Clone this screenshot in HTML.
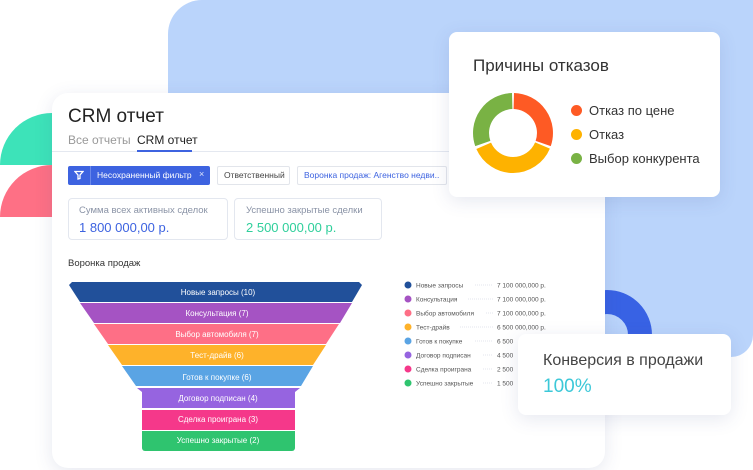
<!DOCTYPE html>
<html><head><meta charset="utf-8"><style>
*{margin:0;padding:0;box-sizing:border-box}
body{width:753px;height:470px;overflow:hidden;background:#fff;font-family:"Liberation Sans","DejaVu Sans",sans-serif;position:relative}
.abs{position:absolute}
.card{position:absolute;background:#fff;border-radius:14px;box-shadow:0 4px 18px rgba(60,80,140,.13)}
.t{position:absolute;white-space:nowrap}
</style></head><body>
<div class="abs" style="left:168px;top:0;width:585px;height:357px;background:#bad4fb;border-radius:34px 0 22px 0"></div>
<svg class="abs" style="left:0;top:0" width="753" height="470">
<circle cx="607" cy="335" r="33" fill="none" stroke="#3862e4" stroke-width="24"/>
<path d="M52 113 A52 52 0 0 0 0 165 L52 165Z" fill="#3de3b9"/>
<path d="M52 165 A52 52 0 0 0 0 217 L52 217Z" fill="#fe7085"/>
</svg>
<div class="card" style="left:52px;top:93px;width:553px;height:375px;border-radius:16px">
<div class="t" style="left:16px;top:13px;font-size:19px;color:#222">CRM отчет</div>
<div class="t" style="left:16px;top:40px;font-size:12px;color:#999">Все отчеты</div>
<div class="t" style="left:85px;top:40px;font-size:12px;color:#222">CRM отчет</div>
<div class="abs" style="left:0;top:58px;width:553px;height:1px;background:#e4e8f0"></div>
<div class="abs" style="left:85px;top:57px;width:55px;height:2px;background:#3d63e0"></div>
<div class="abs" style="left:16px;top:73px;width:142px;height:19px;background:#3d63e0;border-radius:2px"></div>
<div class="abs" style="left:38px;top:73px;width:1px;height:19px;background:#6a88ea"></div>
<svg class="abs" style="left:22px;top:77px" width="10" height="10"><path d="M1 1.5H9L6 5V8.5L4 9V5Z" fill="none" stroke="#fff" stroke-width="1.3"/></svg>
<div class="t" style="left:45px;top:77px;font-size:8.5px;color:#fff">Несохраненный фильтр</div>
<div class="t" style="left:147px;top:76px;font-size:9px;color:#dfe6fb">×</div>
<div class="abs" style="left:165px;top:73px;width:73px;height:19px;border:1px solid #e2e5eb;border-radius:2px"></div>
<div class="t" style="left:172px;top:77px;font-size:8.5px;color:#444">Ответственный</div>
<div class="abs" style="left:245px;top:73px;width:150px;height:19px;border:1px solid #e2e5eb;border-radius:2px"></div>
<div class="t" style="left:252px;top:77px;font-size:8.5px;color:#3d63e0">Воронка продаж: Агенство недви..</div>
<div class="abs" style="left:16px;top:105px;width:160px;height:42px;border:1px solid #e3e7ef;border-radius:4px"></div>
<div class="t" style="left:27px;top:112px;font-size:9.5px;color:#8a93a6">Сумма всех активных сделок</div>
<div class="t" style="left:27px;top:127px;font-size:13px;color:#3d63e0">1 800 000,00 р.</div>
<div class="abs" style="left:182px;top:105px;width:148px;height:42px;border:1px solid #e3e7ef;border-radius:4px"></div>
<div class="t" style="left:194px;top:112px;font-size:9.5px;color:#8a93a6">Успешно закрытые сделки</div>
<div class="t" style="left:194px;top:127px;font-size:13px;color:#2fcf9b">2 500 000,00 р.</div>
<div class="t" style="left:16px;top:165px;font-size:9.5px;color:#333">Воронка продаж</div>
</div>
<svg class="abs" style="left:0;top:0" width="753" height="470" font-family="Liberation Sans, sans-serif" font-size="8" fill="#fff" text-anchor="middle">
<polygon points="72,282 359,282 362,285 352,302 80,302 69,285" fill="#21509a"/>
<polygon points="80,303 352,303 340,323 94,323" fill="#a553c3"/>
<polygon points="94,324 339,324 326,344 108,344" fill="#fe6f86"/>
<polygon points="108,345 326,345 313,365 122,365" fill="#feb22a"/>
<polygon points="122,366 313,366 301,386 136,386" fill="#5aa4e4"/>
<polygon points="137,388 300,388 295,392 295,408 142,408 142,392" fill="#9664e0"/>
<rect x="142" y="410" width="153" height="20" fill="#f5388a"/>
<path d="M142 431H295V448a3 3 0 0 1-3 3H145a3 3 0 0 1-3-3Z" fill="#2fc46f"/>
<text x="218" y="295">Новые запросы  (10)</text>
<text x="217" y="316">Консультация  (7)</text>
<text x="217" y="337">Выбор автомобиля  (7)</text>
<text x="217" y="358">Тест-драйв  (6)</text>
<text x="217" y="380">Готов к покупке  (6)</text>
<text x="218" y="401">Договор подписан  (4)</text>
<text x="218" y="422">Сделка проиграна  (3)</text>
<text x="218" y="443">Успешно закрытые  (2)</text>
<g text-anchor="start" font-size="6.5" fill="#555">
<circle cx="408" cy="285" r="3.5" fill="#21509a"/><text x="416" y="287.5">Новые запросы</text>
<circle cx="408" cy="299" r="3.5" fill="#a553c3"/><text x="416" y="301.5">Консультация</text>
<circle cx="408" cy="313" r="3.5" fill="#fe6f86"/><text x="416" y="315.5">Выбор автомобиля</text>
<circle cx="408" cy="327" r="3.5" fill="#feb22a"/><text x="416" y="329.5">Тест-драйв</text>
<circle cx="408" cy="341" r="3.5" fill="#5aa4e4"/><text x="416" y="343.5">Готов к покупке</text>
<circle cx="408" cy="355" r="3.5" fill="#9664e0"/><text x="416" y="357.5">Договор подписан</text>
<circle cx="408" cy="369" r="3.5" fill="#f5388a"/><text x="416" y="371.5">Сделка проиграна</text>
<circle cx="408" cy="383" r="3.5" fill="#2fc46f"/><text x="416" y="385.5">Успешно закрытые</text>
<g stroke="#e3e6ec" stroke-width="1" stroke-dasharray="1 1">
<line x1="475" y1="285" x2="493" y2="285"/><line x1="468" y1="299" x2="493" y2="299"/><line x1="486" y1="313" x2="493" y2="313"/><line x1="460" y1="327" x2="493" y2="327"/><line x1="475" y1="341" x2="493" y2="341"/><line x1="483" y1="355" x2="493" y2="355"/><line x1="483" y1="369" x2="493" y2="369"/><line x1="483" y1="383" x2="493" y2="383"/></g>
<text x="497" y="287.5">7 100 000,000 р.</text><text x="497" y="301.5">7 100 000,000 р.</text><text x="497" y="315.5">7 100 000,000 р.</text><text x="497" y="329.5">6 500 000,000 р.</text><text x="497" y="343.5">6 500</text><text x="497" y="357.5">4 500</text><text x="497" y="371.5">2 500</text><text x="497" y="385.5">1 500</text>
</g></svg>
<div class="card" style="left:449px;top:32px;width:271px;height:165px;border-radius:8px">
<div class="t" style="left:24px;top:24px;font-size:17px;color:#333">Причины отказов</div>
<svg class="abs" style="left:24px;top:61px" width="82" height="82">
<g transform="translate(40,40)" fill="none" stroke-width="16">
<path d="M0.8,-32 A32 32 0 0 1 30.2,10.5" stroke="#fe5a24"/>
<path d="M29.5,12.5 A32 32 0 0 1 -29.3,12.8" stroke="#feb200"/>
<path d="M-30.2,10.5 A32 32 0 0 1 -0.8,-32" stroke="#79b244"/>
</g></svg>
<div class="abs" style="left:122px;top:73px;width:11px;height:11px;border-radius:50%;background:#fe5a24"></div>
<div class="t" style="left:140px;top:71px;font-size:13px;color:#333">Отказ по цене</div>
<div class="abs" style="left:122px;top:97px;width:11px;height:11px;border-radius:50%;background:#feb200"></div>
<div class="t" style="left:140px;top:95px;font-size:13px;color:#333">Отказ</div>
<div class="abs" style="left:122px;top:121px;width:11px;height:11px;border-radius:50%;background:#79b244"></div>
<div class="t" style="left:140px;top:119px;font-size:13px;color:#333">Выбор конкурента</div>
</div>
<div class="card" style="left:518px;top:334px;width:213px;height:81px;border-radius:8px">
<div class="t" style="left:25px;top:18px;font-size:16px;color:#444">Конверсия в продажи</div>
<div class="t" style="left:25px;top:42px;font-size:19px;color:#3cc8d8">100%</div>
</div>
</body></html>
